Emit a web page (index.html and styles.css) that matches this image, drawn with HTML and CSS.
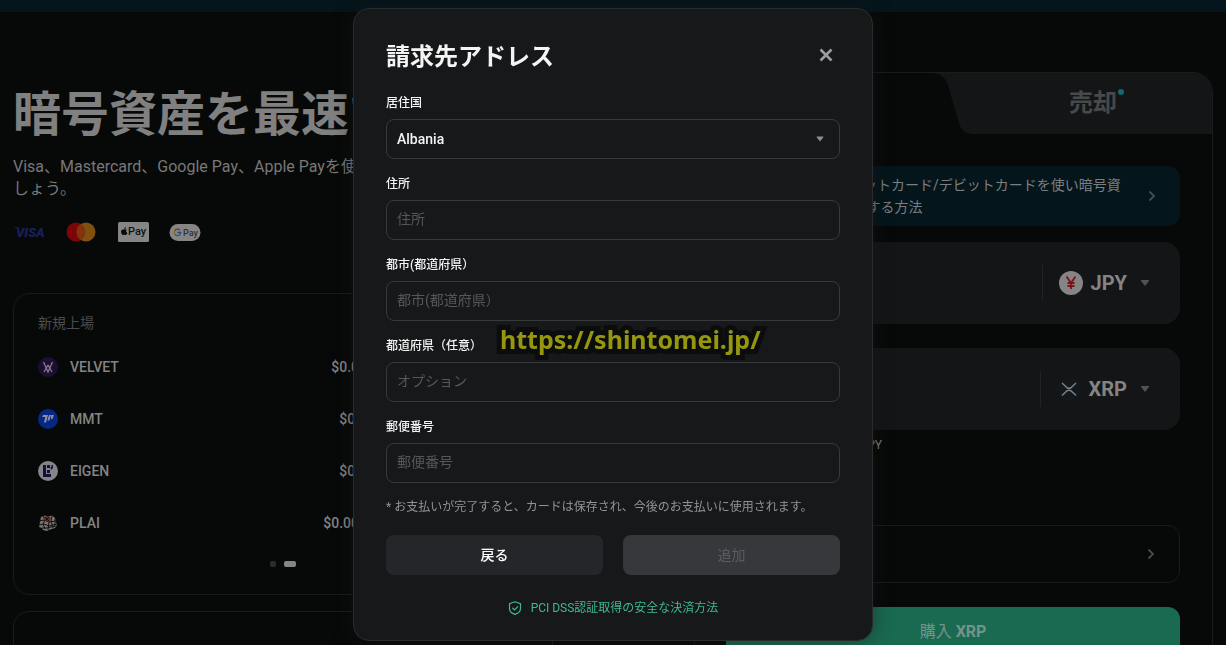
FILE: index.html
```html
<!DOCTYPE html>
<html lang="ja">
<head>
<meta charset="utf-8">
<title>請求先アドレス</title>
<link rel="stylesheet" href="styles.css">
</head>
<body>
<div class="page">
  <div class="topbar"></div>
  <main class="columns">
    <section class="intro">
      <h1 class="headline">暗号資産を最速で</h1>
      <p class="lead">Visa、Mastercard、Google Pay、Apple Payを使って購入しま<br>しょう。</p>
      <div class="brands">
        <svg width="32" height="20" viewBox="0 0 32 20" role="img" aria-label="Visa"><text class="visa" x="3" y="15">VISA</text><path d="M0 5h5l1 3Q4 6 0 5z" fill="#141c52"/></svg>
        <svg width="32" height="20" viewBox="0 0 32 20" role="img" aria-label="Mastercard"><circle cx="11" cy="10" r="9.5" fill="#7c0509"/><circle cx="21" cy="10" r="9.5" fill="#7f5010"/><path d="M16 2a9.500 9.500 0 0 1 0 16a9.500 9.500 0 0 1 0-16z" fill="#82330b"/></svg>
        <svg width="32" height="20" viewBox="0 0 32 20" role="img" aria-label="Apple Pay"><rect x="1" width="31" height="20" rx="1.500" fill="#858585"/><path d="M9.700 7.600c-.8-.4-1.300-.5-2-.2-.8.300-1.300 0-2 .1C4.300 7.800 3.800 9.500 4.300 11c.4 1.200 1.100 2.200 2 2 .8-.4 1.100-.4 1.900 0 1 .2 1.900-1.200 2.100-2.100-1.500-.7-1.500-2.400-.6-3.300zM7.300 7c0-1.200.7-2 1.700-2.100C9 6 8.300 6.900 7.300 7z" fill="#080808"/><text class="applepay" x="11" y="13">Pay</text></svg>
        <svg width="32" height="20" viewBox="0 0 32 20" role="img" aria-label="Google Pay"><rect x=".5" y="2" width="31" height="17" rx="8.500" fill="#858585"/><g fill="none" stroke-width="1.300"><path d="M10.800 8.100A3.200 3.200 0 0 0 5.800 8.600" stroke="#8d2823"/><path d="M5.800 8.600a3.200 3.200 0 0 0 0 3.600" stroke="#8b690d"/><path d="M5.800 12.200a3.200 3.200 0 0 0 4.600.7" stroke="#216c36"/><path d="M8.500 10.500h3.100a3.200 3.200 0 0 1-1.200 2.400" stroke="#24498a"/></g><text class="gpay" x="14" y="14">Pay</text></svg>
      </div>
      <div class="card listing">
        <h2 class="listing-title">新規上場</h2>
        <ul class="coins">
          <li class="coin"><svg width="20" height="20" viewBox="0 0 20 20"><circle cx="10" cy="10" r="10" fill="#1d0f32"/><path d="M5.500 5l4.500 10 4.500-10M10 8l-4 7M10 8l4 7" stroke="#8a8490" stroke-width="1.200" fill="none"/></svg><span class="name">VELVET</span><span class="price">$0.03</span></li>
          <li class="coin"><svg width="20" height="20" viewBox="0 0 20 20"><circle cx="10" cy="10" r="10" fill="#082684"/><path d="M5 6h5L8 13.500H6L7.300 8H4.300zM11 6h2l-1.600 5.500h-2zM13.300 6H16l-1.500 4H13z" fill="#8b91a4"/></svg><span class="name">MMT</span><span class="price">$0.4</span></li>
          <li class="coin"><svg width="20" height="20" viewBox="0 0 20 20"><circle cx="10" cy="10" r="10" fill="#858487"/><path d="M5 4h3v9h5v3H5zM9 4h3v3H9zM9 9h3v3H9zM12.500 6h1v-2H15v3l-2 2z" fill="#15103b"/></svg><span class="name">EIGEN</span><span class="price">$0.3</span></li>
          <li class="coin"><svg width="20" height="20" viewBox="0 0 20 20"><path d="M3 4l4-1.500 3 1L14 2.500 17 5l1 4 1 3-2 3-5 1.500L9 18l-4-1-1-2-3-1 1-5z" fill="#777372"/><path d="M1 8l5-1 5 2 7-1M1 12l5-1 5 2 8-2M4 15l5 0 8-2M5 3l2 4-2 4 2 5M9 3l2 6-1 8M14 3l-1 5 2 7M17 6l0 8" stroke="#111" stroke-width="1" fill="none"/><path d="M6 4l4-1 3 2-2 4-5-2z" fill="#682620"/><path d="M7 4l4 4M11 4L8 7" stroke="#24100e"/></svg><span class="name">PLAI</span><span class="price">$0.004</span></li>
        </ul>
        <div class="pager"><span class="dot"></span><span class="dot dot-on"></span></div>
      </div>
      <div class="card next-card"></div>
    </section>

    <section class="trade">
      <div class="tabs">
        <button class="tab tab-buy" type="button">購入</button>
        <button class="tab tab-sell" type="button">
          <svg class="tab-shape" viewBox="0 0 278 62" preserveAspectRatio="none"><path d="M0 0C9 1 13 8 15 16L25 51Q28 62 38 62H278V20Q278 0 258 0z" fill="#141517"/></svg>
          <span class="tab-text">売却<i class="tab-dot"></i></span>
        </button>
      </div>
      <div class="trade-body">
        <a class="guide" href="#"><span class="guide-text">「クレジットカード/デビットカードを使い暗号資<br>産 を購入する方法</span><svg width="8" height="12" viewBox="0 0 8 12"><path d="M1.500 1.500L6 6l-4.500 4.500" stroke="#494d50" stroke-width="1.800" fill="none"/></svg></a>
        <div class="amount">
          <button class="asset" type="button"><svg width="24" height="24" viewBox="0 0 24 24"><circle cx="12" cy="12" r="12" fill="#878485"/><path d="M7.500 5.500L12 12l4.500-6.500M12 12v6M8.500 12h7M8.500 15h7" stroke="#7c1218" stroke-width="1.800" fill="none"/></svg>JPY<svg class="caret" width="8" height="6" viewBox="0 0 8 6"><path d="M0 0h8v1L4 6 0 1z" fill="#505153"/></svg></button>
        </div>
        <div class="amount">
          <button class="asset" type="button"><svg width="24" height="24" viewBox="0 0 24 24"><circle cx="12" cy="12" r="12" fill="#12181b"/><path d="M5 6l4.500 4.300q2.500 2 5 0L19 6M5 18.500l4.500-4.300q2.500-2 5 0l4.500 4.300" stroke="#7d8182" stroke-width="1.500" fill="none"/></svg>XRP<svg class="caret" width="8" height="6" viewBox="0 0 8 6"><path d="M0 0h8v1L4 6 0 1z" fill="#505153"/></svg></button>
        </div>
        <p class="rate">1 XRP ≈ 357.5 JPY</p>
        <button class="method" type="button" aria-label="決済方法"><svg width="8" height="12" viewBox="0 0 8 12"><path d="M1.500 1.500L6 6l-4.500 4.500" stroke="#494a4b" stroke-width="1.800" fill="none"/></svg></button>
        <button class="buy" type="button">購入 <b>XRP</b></button>
      </div>
    </section>
  </main>
</div>

<div class="overlay">
  <form class="modal">
    <header class="modal-head">
      <h2 class="modal-title">請求先アドレス</h2>
      <button class="close" type="button" aria-label="閉じる"><svg width="14" height="14" viewBox="0 0 14 14"><path d="M1.500 1.500l11 11M12.500 1.500l-11 11" stroke="#9b9c9e" stroke-width="2.600"/></svg></button>
    </header>
    <div class="field">
      <label for="country">居住国</label>
      <div class="select-box">
        <select id="country" class="control"><option>Albania</option></select>
        <svg class="select-caret" width="8" height="6" viewBox="0 0 8 6"><path d="M1 .5h6L7.500 1 4 5.500.5 1z" fill="#8c8d8f"/></svg>
      </div>
    </div>
    <div class="field"><label for="address">住所</label><input id="address" class="control" type="text" placeholder="住所"></div>
    <div class="field"><label for="city">都市(都道府県）</label><input id="city" class="control" type="text" placeholder="都市(都道府県）"></div>
    <div class="field"><label for="state">都道府県（任意）</label><input id="state" class="control" type="text" placeholder="オプション"></div>
    <div class="field"><label for="zip">郵便番号</label><input id="zip" class="control" type="text" placeholder="郵便番号"></div>
    <p class="note">* お支払いが完了すると、カードは保存され、今後のお支払いに使用されます。</p>
    <div class="actions">
      <button class="btn" type="button">戻る</button>
      <button class="btn btn-off" type="button" disabled>追加</button>
    </div>
    <p class="secure"><svg width="14" height="14" viewBox="0 0 14 14"><path d="M7 .8l5.500 1.800v4.900c0 3-2.500 4.900-5.500 5.900-3-1-5.500-2.900-5.500-5.900V2.600zM4.300 6.800l2.200 2.100 3.500-3.600" fill="none" stroke="#3fb98d" stroke-width="1.200"/></svg>PCI DSS認証取得の安全な決済方法</p>
    <span class="watermark">https://shintomei.jp/</span>
  </form>
</div>
</body>
</html>
```
FILE: styles.css
```css
* { box-sizing: border-box; }
body {
  margin: 0;
  height: 100vh;
  overflow: hidden;
  background: #070908;
  color: #848484;
  font-family: Roboto, "Noto Sans CJK JP", sans-serif;
  font-size: 14px;
}
h1, h2, p, ul { margin: 0; padding: 0; }
button, input, select { font: inherit; color: inherit; }
button { border: 0; background: none; padding: 0; }
svg { flex: none; }

.page { height: 100vh; overflow: hidden; }
.topbar { height: 12px; background: #04151b; }
.columns {
  display: grid;
  grid-template-columns: 540fr 519fr;
  gap: 141px;
  padding: 0 13px;
}

.intro { padding-top: 71px; }
.headline {
  font-size: 48px;
  line-height: 64px;
  font-weight: 700;
  color: #808080;
  white-space: nowrap;
}
.lead {
  margin-top: 9px;
  font-size: 16px;
  line-height: 22px;
  color: #787878;
  white-space: nowrap;
}
.brands { display: flex; gap: 20px; margin: 22px 0 51px; }
.visa { font: italic 900 13px Roboto, sans-serif; fill: #182057; }
.applepay { font: 500 11px Roboto, sans-serif; fill: #101010; }
.gpay { font: 500 9px Roboto, sans-serif; fill: #303234; }

.card { border: 1px solid #191b1c; border-radius: 16px; }
.listing { height: 302px; padding: 19px 24px; }
.listing-title { font-size: 14px; line-height: 20px; font-weight: 400; color: #4b4c4d; }
.coins { list-style: none; margin-top: 8px; }
.coin {
  display: grid;
  grid-template-columns: 20px 1fr 110px 161px;
  align-items: center;
  height: 52px;
  font-weight: 500;
  line-height: 20px;
}
.name { padding-left: 12px; }
.price { text-align: right; }
.pager { display: flex; justify-content: center; gap: 8px; margin-top: 12px; }
.dot { width: 6px; height: 6px; border-radius: 2px; background: #2b2c2f; }
.dot-on { width: 12px; background: #858587; }
.next-card { height: 200px; margin-top: 16px; }

.trade {
  margin-top: 60px;
  height: 700px;
  border: 1px solid #191b1c;
  border-radius: 20px;
}
.tabs { display: flex; height: 61px; }
.tab { position: relative; font-size: 24px; font-weight: 700; }
.tab-buy { flex: 1; }
.tab-sell { width: 278px; padding: 0 0 6px 40px; color: #48494a; }
.tab-shape { position: absolute; inset: 0; width: 100%; height: 100%; }
.tab-text { position: relative; }
.tab-dot {
  position: absolute;
  top: 0;
  right: -7px;
  width: 6px;
  height: 6px;
  border-radius: 50%;
  background: #146870;
}
.trade-body { display: flex; flex-direction: column; padding: 32px 32px 0 31px; }
.guide {
  display: flex;
  align-items: center;
  justify-content: space-between;
  height: 60px;
  padding: 0 24px 0 81px;
  border-radius: 12px;
  background: #04151b;
  color: #7a7f81;
  line-height: 22px;
  text-decoration: none;
}
.guide-text { white-space: nowrap; }
.amount {
  display: flex;
  justify-content: flex-end;
  align-items: center;
  height: 82px;
  margin-top: 16px;
  padding-right: 31px;
  border-radius: 16px;
  background: #141517;
}
.amount + .amount { margin-top: 24px; }
.asset {
  display: flex;
  align-items: center;
  gap: 8px;
  height: 36px;
  padding-left: 16px;
  border-left: 1px solid #222325;
  font-size: 20px;
  font-weight: 700;
}
.caret { margin-left: 6px; }
.rate { width: 156px; margin-top: 5px; font-size: 12px; line-height: 20px; text-align: right; }
.method {
  display: flex;
  align-items: center;
  justify-content: flex-end;
  height: 58px;
  margin-top: 70px;
  padding-right: 24px;
  border: 1px solid #191b1c;
  border-radius: 12px;
}
.buy {
  height: 48px;
  margin-top: 24px;
  padding-bottom: 2px;
  border-radius: 12px;
  background: #196a51;
  color: #75938a;
  font-size: 16px;
}

.overlay {
  position: fixed;
  inset: 0;
  display: flex;
  justify-content: center;
  align-items: flex-start;
  padding-top: 8px;
}
.modal {
  position: relative;
  width: 520px;
  max-width: 100%;
  padding: 30px 32px 22px;
  border: 1px solid #2a2b2d;
  border-radius: 16px;
  background: #17181a;
  box-shadow: 0 0 20px rgba(24, 22, 22, 0.5);
  color: #f4f4f4;
}
.modal-head { display: flex; justify-content: space-between; align-items: center; height: 32px; }
.modal-title { padding-top: 4px; font-size: 24px; line-height: 32px; font-weight: 700; }
.close { display: flex; padding: 7px; }
.field { display: flex; flex-direction: column; height: 81px; padding-top: 17px; }
.modal-head + .field { margin-top: 7px; }
.field label { margin-bottom: 8px; font-size: 12px; line-height: 16px; font-weight: 500; }
.control {
  width: 100%;
  height: 40px;
  padding: 0 10px;
  border: 1px solid #38393c;
  border-radius: 8px;
  background: transparent;
  outline: 0;
  appearance: none;
  font-size: 14px;
  font-weight: 500;
}
input.control { padding-bottom: 2px; }
.control::placeholder { color: #565759; font-weight: 400; opacity: 1; }
.select-box { position: relative; }
.select-caret { position: absolute; right: 16px; top: 17px; pointer-events: none; }
.note { margin-top: 15px; font-size: 12px; line-height: 18px; color: #929395; }
.actions { display: grid; grid-template-columns: 1fr 1fr; gap: 20px; margin-top: 19px; }
.btn { height: 40px; padding-bottom: 2px; border-radius: 8px; background: #25262a; font-weight: 500; color: #fff; }
.btn-off { background: #37383c; color: #5b5c60; font-weight: 400; }
.secure {
  display: flex;
  align-items: center;
  justify-content: center;
  gap: 9px;
  margin-top: 23px;
  font-size: 12px;
  line-height: 20px;
  color: #3fb98d;
}
.watermark {
  position: absolute;
  left: 146px;
  top: 312px;
  font: 700 25px/36px "Noto Sans", sans-serif;
  color: #96960f;
  -webkit-text-stroke: 10px #0b0d0d;
  paint-order: stroke fill;
  stroke-linejoin: round;
}
```
